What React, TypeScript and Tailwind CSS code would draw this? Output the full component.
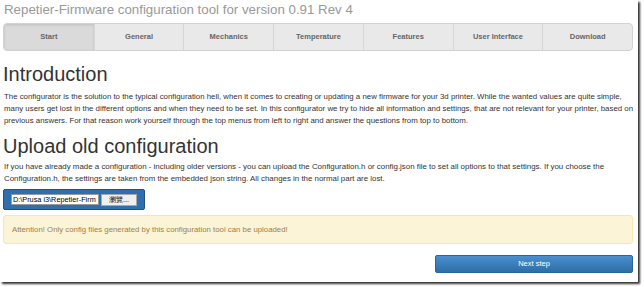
import React from 'react';

const tabs = ['Start', 'General', 'Mechanics', 'Temperature', 'Features', 'User Interface', 'Download'];

const TabBar: React.FC = () => (
    <div className="mt-[5px] flex h-[28px] w-[630px] overflow-hidden rounded-[4px] border border-[#d2d2d2] bg-[#e9e9e9]">
        {tabs.map((t, i) => (
            <div
                key={t}
                className={
                    i === 0
                        ? 'flex w-[90px] items-center justify-center bg-[#dadada] text-[7.5px] font-bold text-[#666] shadow-[inset_0_1px_3px_rgba(0,0,0,0.12)]'
                        : 'flex w-[90px] items-center justify-center border-l border-[#d6d6d6] text-[7.5px] font-bold text-[#666]'
                }
            >
                {t}
            </div>
        ))}
    </div>
);

const App: React.FC = () => {
    return (
        <div className="h-[287px] w-[644px] overflow-hidden bg-white font-['Liberation_Sans',Arial,sans-serif]">
            <div className="h-[282px] w-[638px] bg-white pl-[3px] pr-[5px] shadow-[2px_2px_2px_rgba(0,0,0,0.8)]">
                {/* header */}
                <div className="pl-[1px] pt-[2px] text-[13.3px] leading-[16px] text-[#999]">
                    Repetier-Firmware configuration tool for version 0.91 Rev 4
                </div>

                <TabBar />

                {/* intro */}
                <h1 className="mt-[11px] text-[20px] leading-[24px] text-[#333]">Introduction</h1>
                <p className="mt-[4.5px] whitespace-nowrap pl-[1px] text-[7.85px] leading-[12px] text-[#333]">
                    The configurator is the solution to the typical configuration hell, when it comes to creating or updating a new firmware for your 3d printer. While the wanted values are quite simple,
                    <br />
                    many users get lost in the different options and when they need to be set. In this configurator we try to hide all information and settings, that are not relevant for your printer, based on
                    <br />
                    previous answers. For that reason work yourself through the top menus from left to right and answer the questions from top to bottom.
                </p>

                {/* upload */}
                <h1 className="mt-[7.5px] text-[20px] leading-[24px] text-[#333]">Upload old configuration</h1>
                <p className="mt-[2.5px] whitespace-nowrap pl-[1px] text-[7.9px] leading-[12px] text-[#333]">
                    If you have already made a configuration - including older versions - you can upload the Configuration.h or config.json file to set all options to that settings. If you choose the
                    <br />
                    Configuration.h, the settings are taken from the embedded json string. All changes in the normal part are lost.
                </p>

                <div className="mt-[4.5px] flex h-[21px] w-[142px] items-center gap-[2px] rounded-[2px] border border-[#23527c] bg-[#2f6fad] pl-[7px]">
                    <div className="flex h-[11px] w-[88px] items-center whitespace-nowrap border border-[#9a9a9a] bg-white pl-[1px] text-[7.3px] leading-none text-black">
                        D:\Prusa i3\Repetier-Firm
                    </div>
                    <div className="flex h-[12px] w-[36px] items-center justify-center whitespace-nowrap border border-[#a8a8a8] bg-[#efefef] text-[7px] leading-none text-black">
                        瀏覽...
                    </div>
                </div>

                <div className="mt-[5px] flex h-[29px] w-[630px] items-center rounded-[3px] border border-[#f5e6b8] bg-[#fbf4d7] pl-[8px] text-[7.8px] text-[#a0804a]">
                    Attention! Only config files generated by this configuration tool can be uploaded!
                </div>

                <div className="mt-[11px] flex justify-end">
                    <button className="flex h-[18px] w-[198px] items-center justify-center rounded-[2px] border border-[#2b669a] bg-gradient-to-b from-[#4a8fcf] to-[#2f6ea7] text-[7.5px] text-white">
                        Next step
                    </button>
                </div>
            </div>
        </div>
    );
};

export default App;
